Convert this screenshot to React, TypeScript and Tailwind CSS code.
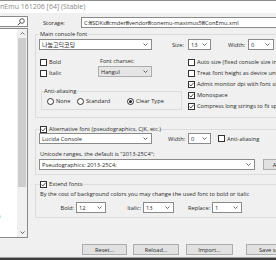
import clsx from "clsx";

const Chevron = () => (
  <svg width="5" height="3" viewBox="0 0 5 3" className="shrink-0">
    <polyline points="0.5,0.5 2.5,2.5 4.5,0.5" fill="none" stroke="#444" strokeWidth="0.8" />
  </svg>
);

const Combo = ({ text, className, grey }: { text?: string; className?: string; grey?: boolean }) => (
  <div
    className={clsx(
      "flex h-[11px] shrink-0 items-center border pl-[2px] pr-[3px]",
      grey ? "border-[#adadad] bg-[#e5e5e5]" : "border-[#8a8a8a] bg-white",
      className
    )}
  >
    <span className="flex-1 truncate whitespace-nowrap">{text}</span>
    <Chevron />
  </div>
);

const Check = ({ label, checked, className }: { label: string; checked?: boolean; className?: string }) => (
  <div className={clsx("flex h-[8px] items-center whitespace-nowrap", className)}>
    <div className="mr-[2px] flex h-[7px] w-[7px] shrink-0 items-center justify-center border border-[#333] bg-white">
      {checked && (
        <svg width="5" height="5" viewBox="0 0 5 5">
          <polyline points="0.4,2.5 1.9,4 4.6,0.8" fill="none" stroke="#222" strokeWidth="0.8" />
        </svg>
      )}
    </div>
    {label}
  </div>
);

const Radio = ({ label, checked, className }: { label: string; checked?: boolean; className?: string }) => (
  <div className={clsx("flex h-[8px] items-center whitespace-nowrap", className)}>
    <div className="mr-[2px] flex h-[7px] w-[7px] shrink-0 items-center justify-center rounded-full border border-[#333] bg-white">
      {checked && <div className="h-[3px] w-[3px] rounded-full bg-[#222]" />}
    </div>
    {label}
  </div>
);

const Button = ({ label, className }: { label: string; className?: string }) => (
  <div
    className={clsx(
      "flex h-[11px] shrink-0 items-center justify-center border border-[#adadad] bg-[#e1e1e1] whitespace-nowrap",
      className
    )}
  >
    {label}
  </div>
);

export default function App() {
  return (
    <div className="h-[260px] w-[276px] overflow-hidden bg-[#f0f0f0] font-['Open_Sans','Noto_Sans_CJK_KR',sans-serif] text-[5.7px] leading-[8px] text-[#2a2a2a]">
      {/* Title bar */}
      <div className="flex h-[13px] items-center border-t border-[#8c8c8c] bg-white text-[7px] text-[#8a8a8a] whitespace-nowrap">
        nEmu 161206 [64] (Stable)
      </div>

      <div className="flex h-[244px]">
        {/* Settings tree */}
        <div className="flex w-[28px] shrink-0 flex-col">
          <div className="mt-[3px] flex h-[11px] items-center justify-end border border-l-0 border-[#8a8a8a] bg-white pr-[2px]">
            <svg width="8" height="8" viewBox="0 0 8 8">
              <circle cx="5" cy="3" r="2.3" fill="none" stroke="#333" strokeWidth="0.8" />
              <line x1="3.3" y1="4.7" x2="0.8" y2="7.2" stroke="#333" strokeWidth="0.9" />
            </svg>
          </div>
          <div className="mt-[1px] flex h-[210px] border border-l-0 border-[#8a8a8a] bg-white">
            <div className="flex flex-1 flex-col justify-end overflow-hidden pb-[17px]">
              <span className="-ml-[3px]">n</span>
            </div>
            <div className="flex w-[10px] flex-col items-center bg-[#f0f0f0]">
              <div className="flex h-[9px] items-center">
                <svg width="5" height="3" viewBox="0 0 5 3">
                  <polyline points="0.5,2.5 2.5,0.5 4.5,2.5" fill="none" stroke="#555" strokeWidth="0.8" />
                </svg>
              </div>
              <div className="h-[149px] w-[8px] bg-[#cdcdcd]" />
              <div className="flex-1" />
              <div className="flex h-[9px] items-center">
                <Chevron />
              </div>
            </div>
          </div>
        </div>

        {/* Font page */}
        <div className="ml-[7px] flex min-w-0 flex-1 flex-col">
          <div className="mt-[4px] flex h-[11px] items-center">
            <span className="w-[46px] shrink-0 pl-[8px]">Storage:</span>
            <div className="flex h-[11px] w-[200px] shrink-0 items-center border border-[#8a8a8a] bg-white pl-[2px] whitespace-nowrap">
              C:₩SDKs₩cmder₩vendor₩conemu-maximus5₩ConEmu.xml
            </div>
          </div>

          {/* Main console font */}
          <fieldset className="mt-[2px] w-[260px] border border-[#dcdcdc] pb-[7px] pl-[3px]">
            <legend className="px-[1px]">Main console font</legend>
            <div className="mt-[1px] flex items-center">
              <Combo text="나눔고딕코딩" className="w-[113px] text-[6px]" />
              <span className="ml-[20px] w-[16px] shrink-0">Size:</span>
              <Combo text="13" className="w-[23px]" />
              <span className="ml-[17px] w-[20px] shrink-0">Width:</span>
              <Combo text="0" className="w-[26px]" />
            </div>

            <div className="mt-[7px] flex">
              <div className="flex w-[149px] shrink-0 flex-col">
                <div className="flex">
                  <div className="flex w-[59px] shrink-0 flex-col gap-[3px] pl-[1px] pt-[1px]">
                    <Check label="Bold" />
                    <Check label="Italic" />
                  </div>
                  <div className="flex flex-col">
                    <span className="ml-[2px]">Font charset:</span>
                    <Combo text="Hangul" grey className="mt-[1px] w-[54px]" />
                  </div>
                </div>
                <fieldset className="ml-[2px] mt-[10px] w-[141px] border border-[#dcdcdc] pb-[4px] pl-[2px]">
                  <legend>Anti-aliasing</legend>
                  <div className="mt-[2px] flex">
                    <Radio label="None" className="ml-[3px] w-[30px]" />
                    <Radio label="Standard" className="w-[50px]" />
                    <Radio label="Clear Type" checked />
                  </div>
                </fieldset>
              </div>
              <div className="flex flex-col gap-[3px] pt-[1px]">
                <Check label="Auto size (fixed console size in cells)" />
                <Check label="Treat font height as device units" />
                <Check label="Admit monitor dpi with font size" checked />
                <Check label="Monospace" checked />
                <Check label="Compress long strings to fit space" checked />
              </div>
            </div>
          </fieldset>

          {/* Alternative font */}
          <fieldset className="mt-[7px] w-[260px] border border-[#dcdcdc] pb-[4px] pl-[3px]">
            <legend className="ml-[1px]">
              <Check label="Alternative font (pseudographics, CJK, etc.)" checked />
            </legend>
            <div className="flex items-center">
              <Combo text="Lucida Console" className="w-[113px]" />
              <span className="ml-[16px] w-[20px] shrink-0">Width:</span>
              <Combo text="0" className="w-[23px]" />
              <Check label="Anti-aliasing" className="ml-[7px]" />
            </div>
            <div className="mt-[6px] pl-[1px] whitespace-nowrap">Unicode ranges, the default is "2013-25C4";</div>
            <div className="mt-[1px] flex items-center">
              <Combo text="Pseudographics: 2013-25C4;" className="w-[216px]" />
              <Button label="Add" className="ml-[8px] w-[30px]" />
            </div>
          </fieldset>

          {/* Extend fonts */}
          <fieldset className="mt-[5px] w-[260px] border border-[#dcdcdc] pb-[4px] pl-[3px]">
            <legend className="ml-[1px]">
              <Check label="Extend fonts" checked />
            </legend>
            <div className="mt-[2px] pl-[1px] whitespace-nowrap">
              By the cost of background colors you may change the used font to bold or italic
            </div>
            <div className="mt-[4px] flex items-center">
              <span className="w-[37px] shrink-0 pr-[2px] text-right">Bold:</span>
              <Combo text="12" className="w-[30px]" />
              <span className="w-[37px] shrink-0 pr-[2px] text-right">Italic:</span>
              <Combo text="13" className="w-[31px]" />
              <span className="ml-[14px] w-[24px] shrink-0">Replace:</span>
              <Combo text="1" className="w-[30px]" />
            </div>
          </fieldset>

          <div className="mt-auto mb-[2px] flex">
            <Button label="Reset..." className="ml-[47px] w-[45px]" />
            <Button label="Reload..." className="ml-[6px] w-[46px]" />
            <Button label="Import..." className="ml-[7px] w-[47px]" />
            <Button label="Save settings" className="ml-[13px] w-[47px] justify-start pl-[12px]" />
          </div>
        </div>
      </div>

      <div className="h-[3px] border-t border-[#a0a0a0] bg-[#3c3c3c]" />
    </div>
  );
}
